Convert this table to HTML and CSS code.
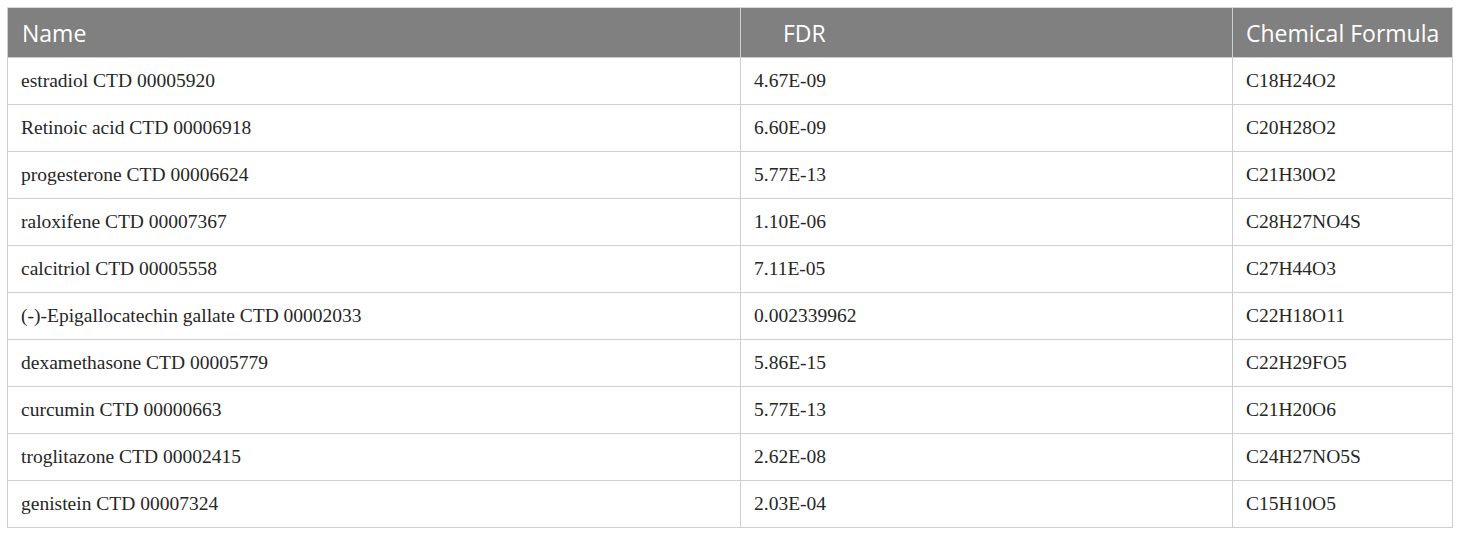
FILE: index.html
```html
<!DOCTYPE html>
<html>
<head>
<meta charset="utf-8">
<link rel="stylesheet" href="styles.css">
</head>
<body>
<table class="data">
  <colgroup><col class="w-name"><col class="w-fdr"><col class="w-form"></colgroup>
  <thead>
    <tr><th class="c-name">Name</th><th class="c-fdr">FDR</th><th class="c-form">Chemical Formula</th></tr>
  </thead>
  <tbody>
    <tr><td>estradiol CTD 00005920</td><td>4.67E-09</td><td>C18H24O2</td></tr>
    <tr><td>Retinoic acid CTD 00006918</td><td>6.60E-09</td><td>C20H28O2</td></tr>
    <tr><td>progesterone CTD 00006624</td><td>5.77E-13</td><td>C21H30O2</td></tr>
    <tr><td>raloxifene CTD 00007367</td><td>1.10E-06</td><td>C28H27NO4S</td></tr>
    <tr><td>calcitriol CTD 00005558</td><td>7.11E-05</td><td>C27H44O3</td></tr>
    <tr><td>(-)-Epigallocatechin gallate CTD 00002033</td><td>0.002339962</td><td>C22H18O11</td></tr>
    <tr><td>dexamethasone CTD 00005779</td><td>5.86E-15</td><td>C22H29FO5</td></tr>
    <tr><td>curcumin CTD 00000663</td><td>5.77E-13</td><td>C21H20O6</td></tr>
    <tr><td>troglitazone CTD 00002415</td><td>2.62E-08</td><td>C24H27NO5S</td></tr>
    <tr><td>genistein CTD 00007324</td><td>2.03E-04</td><td>C15H10O5</td></tr>
  </tbody>
</table>
</body>
</html>
```

FILE: styles.css
```css
html, body {
  margin: 0;
  padding: 0;
  background: #ffffff;
}
body {
  padding: 7px 0 0 7px;
}
.data {
  border-collapse: collapse;
  width: 1445px;
  table-layout: fixed;
}
.w-name { width: 733px; }
.w-fdr { width: 492px; }
.w-form { width: 220px; }
.data th {
  background: #808080;
  color: #ffffff;
  font-family: "Open Sans", sans-serif;
  font-weight: 400;
  font-size: 23px;
  text-align: left;
  height: 49px;
  padding: 0 0 0 14px;
  border: 1px solid #cfcfcf;
  border-top-color: #d8d8d8;
  white-space: nowrap;
}
.data th.c-fdr { padding-left: 42px; }
.data th.c-form { padding-left: 13px; }
.data td {
  font-family: "Liberation Serif", "Times New Roman", serif;
  font-size: 19.5px;
  color: #262626;
  height: 46px;
  padding: 0 0 0 13px;
  border: 1px solid #cfcfcf;
  white-space: nowrap;
}
```
